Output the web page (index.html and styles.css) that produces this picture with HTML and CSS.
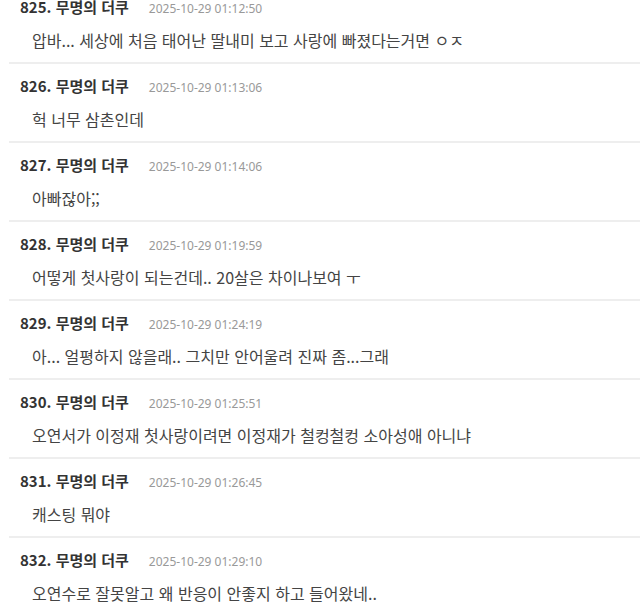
FILE: index.html
```html
<!DOCTYPE html>
<html lang="ko">
<head>
  <meta charset="UTF-8" />
  <meta name="viewport" content="width=device-width, initial-scale=1" />
  <title>댓글</title>
  <link rel="stylesheet" href="styles.css">
</head>
<body>

  <!-- Comment list (scrolled a little) -->
  <ul class="comments">
    <li class="comment">
      <div class="meta"><span class="author">825. 무명의 더쿠</span><span class="date">2025-10-29 01:12:50</span></div>
      <p class="text">압바... 세상에 처음 태어난 딸내미 보고 사랑에 빠졌다는거면 ㅇㅈ</p>
    </li>
    <li class="comment">
      <div class="meta"><span class="author">826. 무명의 더쿠</span><span class="date">2025-10-29 01:13:06</span></div>
      <p class="text">헉 너무 삼촌인데</p>
    </li>
    <li class="comment">
      <div class="meta"><span class="author">827. 무명의 더쿠</span><span class="date">2025-10-29 01:14:06</span></div>
      <p class="text">아빠잖아;;</p>
    </li>
    <li class="comment">
      <div class="meta"><span class="author">828. 무명의 더쿠</span><span class="date">2025-10-29 01:19:59</span></div>
      <p class="text">어떻게 첫사랑이 되는건데.. 20살은 차이나보여 ㅜ</p>
    </li>
    <li class="comment">
      <div class="meta"><span class="author">829. 무명의 더쿠</span><span class="date">2025-10-29 01:24:19</span></div>
      <p class="text">아... 얼평하지 않을래.. 그치만 안어울려 진짜 좀...그래</p>
    </li>
    <li class="comment">
      <div class="meta"><span class="author">830. 무명의 더쿠</span><span class="date">2025-10-29 01:25:51</span></div>
      <p class="text">오연서가 이정재 첫사랑이려면 이정재가 철컹철컹 소아성애 아니냐</p>
    </li>
    <li class="comment">
      <div class="meta"><span class="author">831. 무명의 더쿠</span><span class="date">2025-10-29 01:26:45</span></div>
      <p class="text">캐스팅 뭐야</p>
    </li>
    <li class="comment">
      <div class="meta"><span class="author">832. 무명의 더쿠</span><span class="date">2025-10-29 01:29:10</span></div>
      <p class="text">오연수로 잘못알고 왜 반응이 안좋지 하고 들어왔네..</p>
    </li>
  </ul>

</body>
</html>
```
FILE: styles.css
```css
* {
  margin: 0;
  padding: 0;
  box-sizing: border-box;
}

body {
  font-family: "Noto Sans CJK KR", "Noto Sans", sans-serif;
  background: #fff;
  color: #333;
  overflow: hidden;
}

.comments {
  list-style: none;
  margin-top: -15px;
  margin-left: 9px;
}

.comment {
  height: 79px;
  padding: 13px 0 0 11px;
  border-bottom: 2px solid #eee;
}

.meta {
  display: flex;
  align-items: baseline;
  height: 18px;
  line-height: 18px;
}

.author {
  font-size: 15px;
  font-weight: 700;
  color: #333;
}

.date {
  margin-left: 20px;
  font-family: "Noto Sans", "Noto Sans CJK KR", sans-serif;
  font-size: 12px;
  color: #999;
}

.text {
  margin-top: 13px;
  padding-left: 12px;
  height: 22px;
  font-size: 16px;
  line-height: 22px;
  color: #444;
}
```
